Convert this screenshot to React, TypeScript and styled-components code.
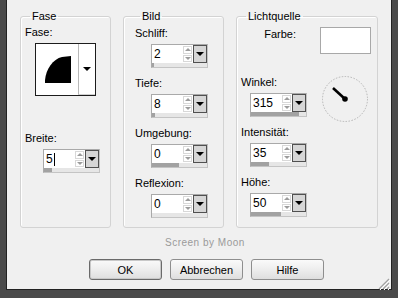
import React from "react";
import styled, { createGlobalStyle } from "styled-components";

const GlobalStyle = createGlobalStyle`
  html, body {
    margin: 0;
    padding: 0;
    background: #f0f0f0;
  }
  body {
    font-family: "Liberation Sans", Arial, sans-serif;
    font-size: 11px;
    color: #000;
  }
`;

const Window = styled.div`
  position: relative;
  box-sizing: border-box;
  width: 398px;
  height: 298px;
  background: #f0f0f0;
  border-left: 6px solid #4a4a4a;
  border-right: 6px solid #4a4a4a;
  border-bottom: 8px solid #4a4a4a;
  box-shadow: inset 1px 0 0 #222, inset -1px 0 0 #222, inset 0 -1px 0 #222;
  padding-top: 10px;
  display: flex;
  flex-direction: column;
`;

const Groups = styled.div`
  display: flex;
  gap: 12px;
  padding-left: 14px;
`;

const Group = styled.fieldset<{ $w: number; $pad: number }>`
  box-sizing: border-box;
  width: ${(p) => p.$w}px;
  height: 218px;
  margin: 0;
  padding: 3px 0 0 ${(p) => p.$pad}px;
  min-width: 0;
  border: 1px solid #d3d3d3;
  border-radius: 3px;
  box-shadow: inset 1px 1px 0 #fff;
  display: flex;
  flex-direction: column;
  align-items: flex-start;
`;

const Legend = styled.legend`
  margin-left: 5px;
  padding: 0 2px;
  font-size: 11px;
  line-height: 13px;
`;

const Label = styled.div<{ $top?: number }>`
  font-size: 11px;
  line-height: 13px;
  margin-top: ${(p) => p.$top ?? 0}px;
`;

const SpinBlock = styled.div<{ $top?: number; $indent: number }>`
  display: flex;
  flex-direction: column;
  align-items: flex-start;
  margin-top: ${(p) => p.$top ?? 0}px;
  & > :last-child {
    margin-left: ${(p) => p.$indent}px;
    margin-top: 4px;
  }
`;

const SpinWrap = styled.div`
  box-sizing: border-box;
  width: 57px;
  border: 1px solid #c4c4c4;
  border-top-color: #a9a9a9;
  border-left-color: #a9a9a9;
  display: flex;
  flex-direction: column;
`;

const SpinRow = styled.div`
  display: flex;
  height: 18px;
`;

const SpinText = styled.div`
  flex: 1;
  background: #fff;
  font-size: 12px;
  line-height: 18px;
  padding-left: 2px;
  display: flex;
  align-items: center;
`;

const Caret = styled.span`
  display: inline-block;
  width: 1px;
  height: 13px;
  background: #000;
  margin-left: 1px;
`;

const Arrows = styled.div`
  width: 9px;
  background: #fff;
  display: flex;
  flex-direction: column;
  gap: 1px;
  padding: 1px 1px 1px 0;
`;

const ArrowHalf = styled.div<{ $up?: boolean }>`
  flex: 1;
  border: 1px solid #d8d8d8;
  display: flex;
  align-items: center;
  justify-content: center;
  &::after {
    content: "";
    border-left: 3px solid transparent;
    border-right: 3px solid transparent;
    ${(p) =>
      p.$up ? "border-bottom: 3px solid #9c9c9c;" : "border-top: 3px solid #9c9c9c;"}
  }
`;

const DropBtn = styled.div`
  box-sizing: border-box;
  width: 14px;
  background: #d6d6d6;
  border: 1px solid #505050;
  display: flex;
  align-items: center;
  justify-content: center;
  &::after {
    content: "";
    border-left: 4px solid transparent;
    border-right: 4px solid transparent;
    border-top: 4px solid #000;
  }
`;

const Strip = styled.div`
  height: 4px;
  background: #e6e6e6;
`;

const Fill = styled.div`
  height: 100%;
  background: #a2a2a2;
`;

const FaseBox = styled.div`
  box-sizing: border-box;
  width: 61px;
  height: 53px;
  margin: 4px 0 0 10px;
  border: 1px solid #1c1c1c;
  background: #fff;
  display: flex;
`;

const FaseShape = styled.div`
  flex: 1;
  padding: 12px 0 0 9px;
`;

const FaseDrop = styled.div`
  width: 16px;
  border-left: 1px solid #b8b8b8;
  border-bottom: 1px solid #d0d0d0;
  display: flex;
  align-items: center;
  justify-content: center;
  &::after {
    content: "";
    border-left: 4px solid transparent;
    border-right: 4px solid transparent;
    border-top: 4px solid #000;
  }
`;

const ColorRow = styled.div`
  display: flex;
  gap: 24px;
  align-items: flex-start;
`;

const FarbeLabel = styled.div`
  width: 55px;
  text-align: right;
  line-height: 13px;
  margin-top: 2px;
`;

const Swatch = styled.div`
  box-sizing: border-box;
  width: 51px;
  height: 27px;
  margin-top: 1px;
  background: #fff;
  border: 1px solid #a8a8a8;
`;

const LightRow = styled.div`
  display: flex;
  margin-top: 22px;
`;

const LightCol = styled.div`
  width: 79px;
  display: flex;
  flex-direction: column;
`;

const Dial = styled.svg`
  display: block;
  margin-top: -1px;
`;

const Credit = styled.div`
  margin: 9px 0 0 159px;
  font-size: 10px;
  line-height: 12px;
  letter-spacing: 0.5px;
  color: #9a9a9a;
`;

const Buttons = styled.div`
  display: flex;
  gap: 8px;
  margin: 10px 0 0 83px;
`;

const Button = styled.button<{ $default?: boolean }>`
  box-sizing: border-box;
  width: 73px;
  height: 21px;
  padding: 0;
  font-family: "Liberation Sans", Arial, sans-serif;
  font-size: 11px;
  color: #000;
  border-radius: 3px;
  border: 1px solid ${(p) => (p.$default ? "#6a6a6a" : "#8e8e8e")};
  background: linear-gradient(#fafafa, #ececec 55%, #dedede);
  box-shadow: ${(p) => (p.$default ? "inset 0 0 0 1px #c8c8c8" : "none")};
`;

const Grip = styled.svg`
  position: absolute;
  right: 2px;
  bottom: 0;
`;

type SpinProps = { value: string; fill: number; caret?: boolean };

const Spin = ({ value, fill, caret }: SpinProps) => (
  <SpinWrap>
    <SpinRow>
      <SpinText>
        {value}
        {caret && <Caret />}
      </SpinText>
      <Arrows>
        <ArrowHalf $up />
        <ArrowHalf />
      </Arrows>
      <DropBtn />
    </SpinRow>
    <Strip>
      <Fill style={{ width: fill }} />
    </Strip>
  </SpinWrap>
);

const App = () => {
  return (
    <>
      <GlobalStyle />
      <Window>
        <Groups>
          <Group $w={91} $pad={4}>
            <Legend>Fase</Legend>
            <Label>Fase:</Label>
            <FaseBox>
              <FaseShape>
                <svg width="26" height="27" viewBox="0 0 26 27">
                  <path d="M0 27 L0 24 C1 13 8 3 17 1 L26 0 L26 27 Z" fill="#000" />
                </svg>
              </FaseShape>
              <FaseDrop />
            </FaseBox>
            <SpinBlock $top={36} $indent={18}>
              <Label>Breite:</Label>
              <Spin value="5" fill={8} caret />
            </SpinBlock>
          </Group>

          <Group $w={101} $pad={11}>
            <Legend>Bild</Legend>
            <SpinBlock $top={1} $indent={16}>
              <Label>Schliff:</Label>
              <Spin value="2" fill={2} />
            </SpinBlock>
            <SpinBlock $top={9} $indent={16}>
              <Label>Tiefe:</Label>
              <Spin value="8" fill={3} />
            </SpinBlock>
            <SpinBlock $top={9} $indent={16}>
              <Label>Umgebung:</Label>
              <Spin value="0" fill={27} />
            </SpinBlock>
            <SpinBlock $top={9} $indent={16}>
              <Label>Reflexion:</Label>
              <Spin value="0" fill={0} />
            </SpinBlock>
          </Group>

          <Group $w={142} $pad={4}>
            <Legend>Lichtquelle</Legend>
            <ColorRow>
              <FarbeLabel>Farbe:</FarbeLabel>
              <Swatch />
            </ColorRow>
            <LightRow>
              <LightCol>
                <SpinBlock $indent={9}>
                  <Label>Winkel:</Label>
                  <Spin value="315" fill={48} />
                </SpinBlock>
                <SpinBlock $top={9} $indent={9}>
                  <Label>Intensität:</Label>
                  <Spin value="35" fill={18} />
                </SpinBlock>
                <SpinBlock $top={9} $indent={9}>
                  <Label>Höhe:</Label>
                  <Spin value="50" fill={30} />
                </SpinBlock>
              </LightCol>
              <Dial width="50" height="50" viewBox="0 0 50 50">
                <circle cx="25" cy="24" r="22.5" fill="none" stroke="#b4b4b4" strokeWidth="1" strokeDasharray="1.5 1.5" />
                <line x1="13" y1="13" x2="25" y2="24" stroke="#000" strokeWidth="2.6" />
                <circle cx="25" cy="24" r="2.8" fill="#000" />
              </Dial>
            </LightRow>
          </Group>
        </Groups>

        <Credit>Screen by Moon</Credit>

        <Buttons>
          <Button $default>OK</Button>
          <Button>Abbrechen</Button>
          <Button>Hilfe</Button>
        </Buttons>

        <Grip width="13" height="13" viewBox="0 0 13 13">
          <path d="M12 2 L2 12 M12 6 L6 12 M12 10 L10 12" stroke="#a0a0a0" strokeWidth="1.2" />
          <path d="M13 3 L3 13 M13 7 L7 13 M13 11 L11 13" stroke="#fff" strokeWidth="1" />
        </Grip>
      </Window>
    </>
  );
};

export default App;
